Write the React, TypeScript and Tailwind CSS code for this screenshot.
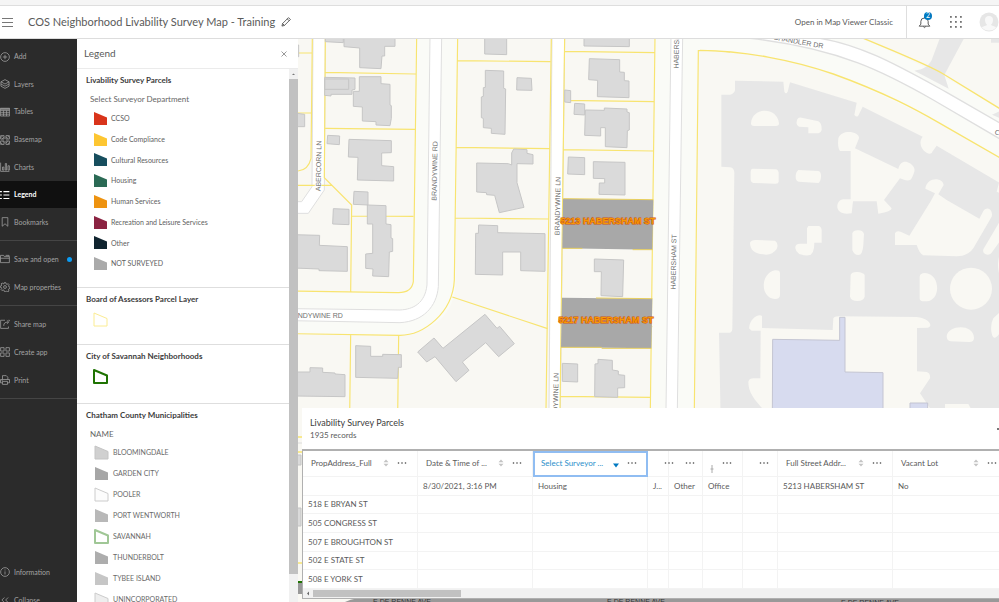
import React from "react";

type IconProps = { children: React.ReactNode; className?: string };

function Icon({ children, className = "size-[10px]" }: IconProps) {
  return (
    <svg viewBox="0 0 16 16" fill="none" stroke="currentColor" strokeWidth="1.2" className={`shrink-0 ${className}`} aria-hidden="true">
      {children}
    </svg>
  );
}

const icons = {
  add: (<><circle cx="8" cy="8" r="7" /><path d="M8 4.5v7M4.5 8h7" /></>),
  layers: (<><path d="M8 1 14.5 4.5 8 8 1.5 4.5Z" /><path d="M1.5 4.5v7L8 15l6.5-3.5v-7M1.5 8 8 11.5 14.5 8" /></>),
  tables: (<><path d="M.6 2h14.8v12.4H.6zM.6 5.5h14.8M.6 8.5h14.8M.6 11.5h14.8M5.500 5.500v9M10.500 5.500v9" /><path d="M.6 3.200h14.800" strokeWidth="2" /></>),
  basemap: (<><path d="M1 1h5.5v5.5H1zM9.5 1H15v5.5H9.5zM1 9.5h5.5V15H1zM9.5 9.5H15V15H9.5z" /><path d="M1 4.5 4 1.5M3 6.5l3.5-3M9.5 3 13 6M12 1l3 3M1 12l3 3M4 9.5l2.5 2.5M9.5 13l3-3M12 15l3-3" /></>),
  charts: (<path d="M1 1v14h14M4 8h2.2v5H4zM8.5 2.5h2v10.5h-2zM12.8 6H15v7h-2.2z" />),
  legend: (<path d="M0 2.5h3M0 8h3M0 13.5h3M5.5 2.5H15M5.5 8H15M5.5 13.5H15" strokeWidth="1.8" />),
  bookmarks: (<path d="M3.5 1h9v13.8L8 10.8l-4.5 4z" />),
  save: (<path d="M.8 13.8V2.2h5l1.2 2h8v9.6zM.8 6.8h14.4M9 2.2h5.5v2" />),
  gear: (<><path d="M6.8 1h2.4l.4 2 1.7.8 1.9-1.1 1.5 1.8-1.1 1.7.6 1.6 1.9.5v2l-2 .6-.7 1.6 1 1.8-1.8 1.4-1.7-1-1.5.5L9 15.2H7l-.5-2-1.6-.6-1.8 1.1-1.5-1.7 1.1-1.8L2 8.6 0 8.1V6.9l2-.6.7-1.6-1-1.7 1.7-1.4 1.700 1L6.400 3z" /><circle cx="8" cy="8" r="2.3" /></>),
  share: (<path d="M8 2H1v13h12.5v-3M6 11c0-4.5 2-6 7-6M11 2.2 14 5l-3 2.8M13.5 2H15v1.5" />),
  create: (<path d="M1 1h5.5v5.5H1zM9.5 1H15v5.5H9.5zM1 9.5h5.5V15H1zM9.5 9.5H15V15H9.5z" />),
  print: (<path d="M4 7V1h6l2.5 2.5V7M3.5 12.5H.8V7.2h14.4v5.3h-2.7M4 10.2h8V15H4zM2.5 9.2h2" />),
  info: (<><circle cx="8" cy="8" r="7" /><path d="M8 7v5M8 4v1.5" /></>),
  collapse: (<path d="m7 4-4 4 4 4M13 4 9 8l4 4" />),
};

type NavItem = { label: string; icon: keyof typeof icons; active?: boolean; dot?: boolean };

const mainItems: NavItem[] = [
  { label: "Add", icon: "add" },
  { label: "Layers", icon: "layers" },
  { label: "Tables", icon: "tables" },
  { label: "Basemap", icon: "basemap" },
  { label: "Charts", icon: "charts" },
  { label: "Legend", icon: "legend", active: true },
  { label: "Bookmarks", icon: "bookmarks" },
];
const mapItems: NavItem[] = [
  { label: "Save and open", icon: "save", dot: true },
  { label: "Map properties", icon: "gear" },
];
const outputItems: NavItem[] = [
  { label: "Share map", icon: "share" },
  { label: "Create app", icon: "create" },
  { label: "Print", icon: "print" },
];
const footItems: NavItem[] = [
  { label: "Information", icon: "info" },
  { label: "Collapse", icon: "collapse" },
];

function NavGroup({ items, className }: { items: NavItem[]; className: string }) {
  return (
    <div className={`flex shrink-0 flex-col ${className}`}>
      {items.map((item) => (
        <button
          key={item.label}
          className={`flex w-full flex-1 items-center gap-1 text-left text-[7px] leading-none whitespace-nowrap ${
            item.active ? "bg-[#101010] font-bold text-white" : "text-[#a3a3a3]"
          }`}
        >
          <Icon>{icons[item.icon]}</Icon>
          <span>{item.label}</span>
          {item.dot && <span className="mr-[5px] ml-auto size-[5px] shrink-0 rounded-full bg-[#0a9cf5]" />}
        </button>
      ))}
    </div>
  );
}

function Divider() {
  return <div className="my-1 h-px shrink-0 bg-[#454545]" />;
}

function Sidebar() {
  return (
    <nav className="flex w-[77px] shrink-0 flex-col overflow-hidden bg-[#2b2b2b] pt-1">
      <NavGroup items={mainItems} className="h-[193px]" />
      <Divider />
      <NavGroup items={mapItems} className="h-[56px]" />
      <Divider />
      <NavGroup items={outputItems} className="h-[84px]" />
      <Divider />
      <div className="flex-1" />
      <NavGroup items={footItems} className="-mb-3 h-[56px]" />
    </nav>
  );
}

function Swatch({ fill, stroke = "none", width = 1 }: { fill: string; stroke?: string; width?: number }) {
  return (
    <svg viewBox="0 0 15 15" className="size-[15px] shrink-0 overflow-visible" aria-hidden="true">
      <path d="M1 1 14 6.500V14H1z" fill={fill} stroke={stroke} strokeWidth={width} strokeLinejoin="round" />
    </svg>
  );
}

const departments = [
  ["CCSO", "#d9341b"],
  ["Code Compliance", "#fdc632"],
  ["Cultural Resources", "#174e5e"],
  ["Housing", "#2b6a55"],
  ["Human Services", "#ee9310"],
  ["Recreation and Leisure Services", "#8b2342"],
  ["Other", "#10242f"],
  ["NOT SURVEYED", "#aaaaaa"],
];

const towns: { name: string; fill: string; stroke?: string; width?: number }[] = [
  { name: "BLOOMINGDALE", fill: "#d0d0d0", stroke: "#c4c4c4" },
  { name: "GARDEN CITY", fill: "#a6a6a6" },
  { name: "POOLER", fill: "#fcfcfc", stroke: "#cccccc" },
  { name: "PORT WENTWORTH", fill: "#b8b8b8" },
  { name: "SAVANNAH", fill: "#ffffff", stroke: "#a0c796", width: 2 },
  { name: "THUNDERBOLT", fill: "#adadad" },
  { name: "TYBEE ISLAND", fill: "#c6c6c6" },
  { name: "UNINCORPORATED", fill: "#eeeeee", stroke: "#cccccc" },
];

function Section({ title, className, children }: { title: string; className: string; children: React.ReactNode }) {
  return (
    <section className={`shrink-0 border-b border-[#dedede] pt-1.5 pl-[9px] ${className}`}>
      <h3 className="text-[8px] leading-[10px] font-bold text-[#3c3c3c]">{title}</h3>
      {children}
    </section>
  );
}

function LegendPanel() {
  return (
    <aside className="flex w-[221px] shrink-0 flex-col bg-white">
      <div className="flex h-[30px] shrink-0 items-center justify-between border-b border-[#ebebeb] pl-[7px]">
        <h2 className="text-[10px] text-[#5a5a5a]">Legend</h2>
        <button aria-label="Close" className="mr-2.5 text-[#555]">
          <Icon className="size-[8px]"><path d="m3 3 10 10M13 3 3 13" /></Icon>
        </button>
      </div>
      <div className="flex min-h-0 flex-1">
        <div className="flex min-w-0 flex-1 flex-col overflow-hidden">
          <Section title="Livability Survey Parcels" className="h-[219px]">
            <p className="mt-2 ml-1 text-[8px] leading-[12px] text-[#666]">Select Surveyor Department</p>
            <ul className="mt-[3px] ml-[7px] flex h-[166px] flex-col text-[7px] text-[#606060]">
              {departments.map(([name, color]) => (
                <li key={name} className="flex flex-1 items-center gap-[3px]">
                  <Swatch fill={color} />
                  {name}
                </li>
              ))}
            </ul>
          </Section>
          <Section title="Board of Assessors Parcel Layer" className="h-[57px]">
            <div className="mt-2 ml-[7px]"><Swatch fill="#ffffff" stroke="#fbec92" /></div>
          </Section>
          <Section title="City of Savannah Neighborhoods" className="h-[59px]">
            <div className="mt-2 ml-[7px]"><Swatch fill="#ffffff" stroke="#1f7302" width={2} /></div>
          </Section>
          <Section title="Chatham County Municipalities" className="h-[260px]">
            <p className="mt-2 ml-1 text-[8px] leading-[12px] text-[#666]">NAME</p>
            <ul className="mt-0.5 ml-2 text-[7px] text-[#6a6a6a]">
              {towns.map((t) => (
                <li key={t.name} className="flex h-[21px] items-center gap-1">
                  <Swatch fill={t.fill} stroke={t.stroke} width={t.width} />
                  {t.name}
                </li>
              ))}
            </ul>
          </Section>
        </div>
        <div className="flex w-[9px] shrink-0 flex-col bg-[#f1f1f1]">
          <svg viewBox="0 0 9 10" className="h-[10px] w-[9px]" aria-hidden="true"><path d="M3 6 4.5 4.5 6 6z" fill="#777" /></svg>
          <div className="mb-[28px] flex-1 bg-[#c1c1c1]" />
        </div>
      </div>
    </aside>
  );
}

/* Base map: every group holds one tile drawn at three times its size. */
function BaseMap() {
  return (
    <svg
      viewBox="298 39 701 563"
      preserveAspectRatio="xMinYMin slice"
      className="absolute inset-0 size-full"
      role="img"
      aria-label="Map of survey parcels"
      fontFamily="'Liberation Sans', Arial, sans-serif"
    >
      <rect x="298" y="39" width="1400" height="1200" fill="#f9f8f3" />

      {/* north-west tile */}
      <g transform="translate(290 30) scale(0.333333)">
        <path d="M377 25H503L497 765Q485 900 330 916L24 911V783H325Q368 785 370 755Z" fill="#fafbf7" />
        <path d="M69 20 66 470 35 515H10V550H55L103 480 106 20Z" fill="#fff" stroke="#dfdfdf" strokeWidth="3" />
        <path d="M420 20 411 765C405 820 370 838 330 840L10 836V872L330 878C400 874 440 830 445 770L455 20Z" fill="#fff" stroke="#dfdfdf" strokeWidth="3" />
        <g fill="none" stroke="#f8e470" strokeWidth="3.500">
          <path d="M67 20 63 385Q55 420 24 423M106 20 103 443 185 525 182 787M10 69H67M10 249H64M10 466H125M106 127 377 132M106 295 375 298M380 20 370 755Q365 788 325 788L10 783M503 20 493 750C488 850 400 916 330 916L10 911M503 92 782 95M500 352 780 356M185 558 370 559M496 564 776 567M487 801 773 896M182 915 178 1240M326 917 322 1240" />
        </g>
        <g fill="#dadada" stroke="#c6c6c6" strokeWidth="3">
          <path d="M106 20H160V38L106 35ZM162 20H315V49H284V78H276L273 116 209 113V54L162 50Z" />
          <path d="M104 142 195 144V178L186 180V193H123V198L104 196Z" />
          <path d="M104 147H176V178H104Z" fill="none" />
          <path d="M208 140H273V161L300 163V225L304 227V265L300 287 258 285V275L217 273V231L190 229V184H208Z" />
          <path d="M113 316 149 318 148 344 111 341ZM177 328 304 332V368L275 369V407L311 410V453L202 450 204 382 175 381Z" />
          <path d="M192 484 234 486V525L190 523ZM232 525 288 527V582L303 584V624L308 626V664L298 666 296 740 248 738 249 717 227 715V672L248 670V582H232ZM130 536 177 538V584L128 582Z" />
          <path d="M20 250 44 253V290H20ZM20 45V80H26V45Z" />
          <path d="M10 614 89 616 88 646 172 650V724L87 722V717L10 714Z" />
          <path d="M10 1026H60V1013L98 1014V1027L135 1029V1032L165 1034V1100L10 1098Z" />
          <path d="M197 947 242 949V979H278V973L334 974V1012H325L323 1045 197 1042Z" />
          <path d="M383 966 432 924 459 955 585 853 621 895 629 889 673 941 626 980 587 938 517 996 537 1021 498 1055 435 980 410 996Z" />
          <path d="M584 20H650V74L584 72ZM681 143 724 145 726 181 680 180ZM586 121 641 123V175L647 177 645 313 604 310V295L580 293V265L574 263V201L580 199V173L586 172Z" />
          <path d="M560 399 655 401 665 405V369L671 357 711 359V370L729 374V402L681 401V458L702 532 628 548 614 496 590 494 589 488 560 486Z" />
          <path d="M566 585 623 587V608L765 611V724L692 722V666H638V735L556 733 557 610H565Z" />
        </g>
      </g>

      {/* centre tile */}
      <g transform="translate(530 30) scale(0.333333)">
        <path d="M375 20H600V65L505 62 493 1140H361Z" fill="#fafbf7" />
        <path d="M66 20 57 1140H91L104 20Z" fill="#fff" stroke="#dfdfdf" strokeWidth="3" />
        <path d="M423 20 408 1140H442L458 20Z" fill="#fff" stroke="#dfdfdf" strokeWidth="3" />
        <g fill="none" stroke="#f8e470" strokeWidth="3.500">
          <path d="M64 20 48 1140M104 20 90 1140M375 20 361 1140M104 64 375 68M100 211 373 215M100 359 371 363M96 888 367 890M92 1099 361 1102M493 1140 505 62Q560 60 600 66" />
        </g>
        <g fill="#dadada" stroke="#c6c6c6" strokeWidth="3">
          <path d="M162 20H298V50L162 48ZM178 86 269 89V126L283 127V152L297 153V203L202 200 203 151 176 149ZM104 180 122 182V218L104 216Z" />
          <path d="M134 220 164 222V255L132 253ZM166 240 223 241V234L291 237V246L298 248V300L292 302 291 353 226 350V293H212V318L164 316Z" />
          <path d="M115 381 164 383V434L113 432ZM190 395 285 397V495L207 493 208 459H224V446L190 445Z" />
          <path d="M193 687 281 690 278 800 213 797 214 725H193Z" />
          <path d="M97 1000 143 1002V1056L97 1054ZM204 988 247 991V1020L265 1023V1034L284 1036V1073L263 1074V1102L194 1100 195 1002 204 1001Z" />
        </g>
        <path d="M99 506 370 510 367 659 97 655Z" fill="#a8a8a8" />
        <path d="M96 803 367 806 364 955 93 952Z" fill="#a8a8a8" />
        <path d="M97 655H157M308 659H367M198 804 367 806M93 952H215M215 955H364M100 506 370 509" stroke="#e8cf5e" strokeWidth="3" />
      </g>

      {/* campus tile */}
      <g transform="translate(700 0) scale(0.333333)">
        <path d="M0 100H440C560 140 760 240 960 360V510C700 350 560 290 400 222 280 180 130 152 0 151Z" fill="#fafbf7" />
        <path d="M725 100H800L733 225 746 266 643 212C670 208 685 200 695 180ZM873 100H960V128H873ZM876 344 960 305V380Z" fill="#e7e7e7" />
        <path d="M105 242 250 245 253 275Q258 285 263 275L270 247 470 308 463 345Q472 354 476 345L488 320 668 410C645 440 690 475 697 455L710 437 960 585V1260H62L57 998H90Q97 996 97 985L103 520Q103 503 90 502L64 500V284H90Q104 280 105 270Z" fill="#e7e7e7" />
        <g fill="#f9f8f3">
          <path d="M153 370C157 320 232 320 237 370Q237 378 228 378H162Q153 378 153 370ZM290 365Q292 350 305 353L355 364Q366 370 365 390 362 400 350 400H325V382L297 380Q288 378 290 365ZM158 506 228 508Q237 510 236 525V545Q235 552 225 551L160 549Q152 547 152 537V517Q152 507 158 506ZM295 510 355 513Q364 515 363 530T355 549L297 545Q287 544 287 530T295 510Z" />
          <path d="M465 445 595 507C600 485 615 480 630 490 650 505 645 515 635 535 630 545 615 542 600 535L552 600 575 625Q575 635 535 641L530 604H459L455 640C400 650 405 600 430 598H452V453H420Q412 445 415 415C425 385 480 395 477 415Z" />
          <path d="M676 566C680 530 728 530 731 555L715 583 740 600 838 656 850 633C865 615 880 635 875 650L820 745Q805 768 770 769L670 766Q660 764 650 735H585V700Q590 690 605 697L628 707 693 602 705 580Z" />
          <path d="M960 600 897 668 850 748C845 765 870 770 877 755L960 640ZM890 575 897 548 960 590V610Z" />
          <path d="M150 728Q155 718 170 720L225 722Q237 730 230 747 215 768 190 763 150 760 150 728ZM325 678H357Q366 682 365 695V728H343Q343 765 325 766 290 768 286 745 285 731 300 731H321V685ZM457 700Q460 690 475 691T492 702L490 735Q488 765 475 765T457 750Z" />
          <path d="M240 818V885Q240 897 225 897C180 895 180 820 225 811Q238 810 240 818ZM452 825Q455 815 472 816T494 825V890Q490 903 472 903T450 890ZM659 830Q660 819 675 819C720 820 725 900 680 904H668Q659 903 659 895Z" />
          <circle cx="813" cy="866" r="63" />
          <path d="M740 1008C745 975 820 970 822 1013Q822 1026 808 1026L752 1024Q740 1022 740 1008ZM897 770C893 790 893 800 897 820L960 840V700ZM960 880 880 955Q870 975 875 1000T897 1003H960ZM735 1212H805L815 1230H735Z" />
          <path d="M147 985C150 950 180 940 186 948V984L398 990 400 955Q403 949 415 949L650 951C690 955 700 980 683 983L651 984V1114L680 1116Q692 1120 690 1135L660 1180 700 1240H200C165 1200 145 1180 145 1145Q148 1135 160 1135H181L182 992H155Z" />
        </g>
        <path d="M218 1018 419 1021V952H435V1116L549 1118V1240H217ZM630 1209H683V1240H630Z" fill="#d7dbef" stroke="#c4c5d2" strokeWidth="3" />
        <path d="M0 80 150 115C420 145 560 220 700 300L960 452V404L740 277C600 200 480 130 340 112L200 70Z" fill="#fff" stroke="#dfdfdf" strokeWidth="4" />
        <g fill="none" stroke="#f8e470" strokeWidth="4">
          <path d="M0 151C130 152 280 180 400 222 560 280 650 330 720 370L960 508M450 98C560 145 690 195 735 225L960 363" />
        </g>
      </g>

      {/* edge of the avenue to the south */}
      <path d="M298 437h10M298 452h10M298 563h10" stroke="#f8e470" strokeWidth="1.5" />
      <path d="M298 443h10" stroke="#dcdcdc" />
      <path d="M297 455h4v10h-4zM297 508h4v18h-4z" fill="#dadada" stroke="#c4c4c4" />
      <path d="M298 583h60v11h-60zM345 602q10-5 30-5h1000v30H345z" fill="#999" />
      <path d="M298 582h20" stroke="#1f7302" strokeWidth="2" />

      <g fontSize="7" fill="#707070" textAnchor="middle" stroke="#fff" strokeWidth="1.5" paintOrder="stroke">
        <text transform="translate(321 166) rotate(-89)">ABERCORN LN</text>
        <text transform="translate(437 171) rotate(-89)">BRANDYWINE RD</text>
        <text transform="translate(560 206) rotate(-89)">BRANDYWINE LN</text>
        <text transform="translate(558 402) rotate(-89)">BRANDYWINE LN</text>
        <text transform="translate(679 41) rotate(-89)">HABERSHAM ST</text>
        <text transform="translate(676 262) rotate(-89)">HABERSHAM ST</text>
        <text x="313" y="318">BRANDYWINE RD</text>
        <text transform="translate(798 44) rotate(10)">CHANDLER DR</text>
        <text transform="translate(1016 146) rotate(30)">CHANDLER DR</text>
      </g>
      <g fontSize="7" fill="#333" textAnchor="middle">
        <text x="402" y="604">E DE RENNE AVE</text>
        <text x="636" y="604">E DE RENNE AVE</text>
        <text x="870" y="605">E DE RENNE AVE</text>
      </g>
      <g fontSize="9" fontWeight="bold" fill="#f59a04" stroke="#d2560c" strokeWidth="1" paintOrder="stroke" textAnchor="middle">
        <text x="608" y="224">5213 HABERSHAM ST</text>
        <text x="606" y="323">5217 HABERSHAM ST</text>
      </g>
    </svg>
  );
}

type Column = { key: string; label?: string; width: string; sorted?: boolean; pin?: boolean; inset?: string };

const columns: Column[] = [
  { key: "prop", label: "PropAddress_Full", width: "w-[115px]" },
  { key: "date", label: "Date & Time of ...", width: "w-[115px]" },
  { key: "dept", label: "Select Surveyor ...", width: "w-[115px]", sorted: true },
  { key: "job", width: "w-[21px]", inset: "pl-4" },
  { key: "other", width: "w-[34px]", inset: "pl-4" },
  { key: "office", width: "w-[40px]", pin: true },
  { key: "blank", width: "w-[35px]", inset: "pl-4" },
  { key: "street", label: "Full Street Addr...", width: "w-[115px]" },
  { key: "vacant", label: "Vacant Lot", width: "w-[115px]" },
];

const rows = [
  ["", "8/30/2021, 3:16 PM", "Housing", "J...", "Other", "Office", "", "5213 HABERSHAM ST", "No"],
  ["518 E BRYAN ST", "", "", "", "", "", "", "", ""],
  ["505 CONGRESS ST", "", "", "", "", "", "", "", ""],
  ["507 E BROUGHTON ST", "", "", "", "", "", "", "", ""],
  ["502 E STATE ST", "", "", "", "", "", "", "", ""],
  ["508 E YORK ST", "", "", "", "", "", "", "", ""],
];

function Dots() {
  return (
    <button aria-label="Column options" className="shrink-0 text-[#444]">
      <svg viewBox="0 0 10 4" className="h-1 w-[10px]" fill="currentColor" aria-hidden="true">
        <circle cx="1.5" cy="2" r="0.8" /><circle cx="5" cy="2" r="0.8" /><circle cx="8.5" cy="2" r="0.8" />
      </svg>
    </button>
  );
}

function HeaderCell({ column }: { column: Column }) {
  const ring = column.sorted ? "outline-2 -outline-offset-2 outline-[#90bdf2]" : "";
  return (
    <th scope="col" className={`h-[26px] border-r border-b border-[#f3f3f3] p-0 pb-0.5 font-normal ${column.width} ${ring}`}>
      <div className={`flex items-center ${column.inset ?? "justify-end pr-[10px] pl-2"}`}>
        {column.label && (
          <button className={`min-w-0 flex-1 text-left whitespace-nowrap ${column.sorted ? "text-[#2a8fcb]" : ""}`}>{column.label}</button>
        )}
        {column.label && (
          <svg viewBox="0 0 6 8" className={`mr-2 h-2 w-[6px] shrink-0 ${column.sorted ? "mt-0.5" : ""}`} aria-hidden="true">
            {column.sorted ? <path d="M0 3.500h6L3 7.500z" fill="#0079c1" /> : <path d="M.5 3.200 3 .5l2.500 2.700zM.5 4.800 3 7.500l2.500-2.700z" fill="#c4c4c4" />}
          </svg>
        )}
        {column.pin && (
          <svg viewBox="0 0 4 10" className="mt-3 mr-2 h-[10px] w-1 shrink-0" aria-hidden="true"><path d="M2 1v8M.5 5h3" stroke="#aaa" /></svg>
        )}
        <Dots />
      </div>
    </th>
  );
}

function AttributeTable() {
  return (
    <section className="relative mb-[3px] ml-1 flex h-[191px] flex-col bg-white text-[#5a5a5a]">
      <header className="flex h-[41px] shrink-0 items-center pl-2">
        <div className="min-w-0 flex-1">
          <h2 className="text-[9px] leading-[13px] text-[#404040]">Livability Survey Parcels</h2>
          <p className="text-[8px] leading-[12px]">1935 records</p>
        </div>
        <button aria-label="Table options" className="size-[2px] bg-[#777]" />
      </header>
      <div className="min-h-0 flex-1 overflow-hidden border-t-2 border-b border-l border-[#b0b0b0]">
        <table className="h-[138px] w-[705px] table-fixed border-separate border-spacing-0 text-left text-[8px] leading-[10px]">
          <thead>
            <tr>{columns.map((c) => <HeaderCell key={c.key} column={c} />)}</tr>
          </thead>
          <tbody>
            {rows.map((row, r) => (
              <tr key={r}>
                {row.map((cell, i) => (
                  <td key={columns[i].key} className="border-r border-b border-[#f3f3f3] px-[5px] py-0 whitespace-nowrap">{cell}</td>
                ))}
              </tr>
            ))}
          </tbody>
        </table>
        <div className="flex h-[9px] items-center bg-[#f1f1f1]">
          <svg viewBox="0 0 10 9" className="h-[9px] w-[10px]" aria-hidden="true"><path d="M6 2.5 4 4.5 6 6.5z" fill="#666" /></svg>
          <div className="h-[7px] w-[148px] bg-[#c1c1c1]" />
        </div>
      </div>
    </section>
  );
}

function TopBar() {
  return (
    <header className="flex h-[39px] shrink-0 items-stretch border-t-[5px] border-b border-t-[#f5f5f5] border-b-[#dddddd] bg-white">
      <div className="flex flex-1 items-center border-t border-[#dedede]">
        <button aria-label="Menu" className="ml-0.5 text-[#777]">
          <svg viewBox="0 0 11 11" className="size-[11px]" stroke="currentColor" aria-hidden="true"><path d="M0 1.5h11M0 5.5h11M0 9.5h11" /></svg>
        </button>
        <h1 className="ml-[15px] text-[11px] text-[#5a5a5a]">COS Neighborhood Livability Survey Map - Training</h1>
        <button aria-label="Edit title" className="ml-1.5 text-[#333]">
          <Icon className="size-[10px]"><path d="m1.5 14.5 1-4L12 1l3 3-9.5 9.5zM10 3l3 3M2.5 10.5l3 3" /></Icon>
        </button>
        <a href="#classic" className="ml-auto pr-[13px] text-[8px] text-[#5a5a5a]">Open in Map Viewer Classic</a>
      </div>
      <div className="flex items-center border-t border-l border-[#dedede] pl-[11px]">
        <button aria-label="Notifications" className="relative text-[#555]">
          <Icon className="size-[13px]"><path d="M1.5 12.5 3.5 10V6.5Q3.5 2.5 8 2.5t4.5 4V10l2 2.5zM6.5 13q1.5 2.5 3 0M8 2.5V1" /></Icon>
          <span className="absolute -top-1 left-[6px] flex size-2 items-center justify-center rounded-full bg-[#0079c1] text-[7px] leading-none text-white">2</span>
        </button>
        <button aria-label="Apps" className="ml-[19px] text-[#666]">
          <svg viewBox="0 0 12 12" className="size-3" fill="currentColor" aria-hidden="true">
            {[0, 5, 10].map((y) => [0, 5, 10].map((x) => <rect key={`${x}-${y}`} x={x} y={y} width="1.8" height="1.8" rx="0.5" />))}
          </svg>
        </button>
        <button aria-label="Account" className="ml-[17px]">
          <svg viewBox="0 0 20 20" className="size-5" aria-hidden="true">
            <circle cx="10" cy="10" r="9.5" fill="#e6e6e6" />
            <path d="M10 4c6 0 4 8 2 8.5 0 1.5 5 1.5 5 3.5q-7 5-14 0c0-2 5-2 5-3.5C6 12 4 4 10 4Z" fill="#f8f8f8" />
          </svg>
        </button>
      </div>
    </header>
  );
}

export default function App() {
  return (
    <div className="flex h-screen flex-col overflow-hidden font-['Lato','Open_Sans',sans-serif]">
      <TopBar />
      <div className="flex min-h-0 flex-1">
        <Sidebar />
        <LegendPanel />
        <main className="relative flex min-w-0 flex-1 flex-col justify-end overflow-hidden">
          <BaseMap />
          <AttributeTable />
        </main>
      </div>
    </div>
  );
}
